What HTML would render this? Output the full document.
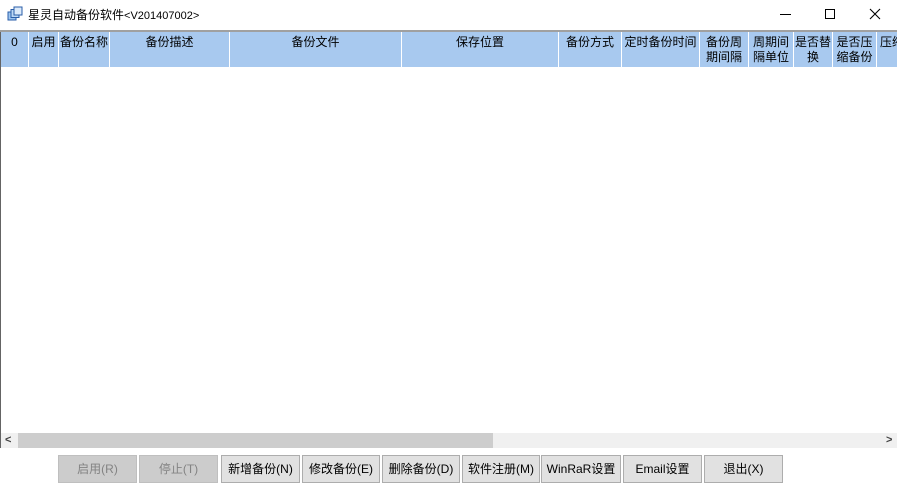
<!DOCTYPE html>
<html><head><meta charset="utf-8"><style>
*{margin:0;padding:0;box-sizing:border-box}
body{width:897px;height:488px;background:#fff;font-family:"Liberation Sans","Noto Sans CJK SC",sans-serif;font-size:12px;color:#000;position:relative;overflow:hidden}
.abs{position:absolute}
.hdr{position:absolute;top:32px;height:35px;background:#a8c9ef;left:1px;right:0}
.col{position:absolute;top:32px;height:35px;border-right:1px solid #fff;text-align:center;line-height:15px;padding-top:3px;white-space:nowrap;overflow:hidden}
.btn{position:absolute;top:455px;height:28px;border:1px solid #adadad;background:#e1e1e1;text-align:center;line-height:26px;font-size:12px}
.dis{background:#cccccc;border-color:#bfbfbf;color:#838383}
</style></head><body>
<svg class="abs" style="left:7px;top:6px" width="16" height="16" viewBox="0 0 16 16"><rect x="1" y="6" width="8" height="8" fill="#9cc4ef" stroke="#2a5ea8"/><rect x="4" y="3.5" width="8" height="8" fill="#bcd8f5" stroke="#2a5ea8"/><rect x="7" y="1" width="8" height="8" fill="#dceafa" stroke="#2a5ea8"/></svg>
<div class="abs" style="left:28px;top:7px;font-size:12px;line-height:16px">星灵自动备份软件<span style="font-size:11px">&lt;V201407002&gt;</span></div>
<div class="abs" style="left:780px;top:14px;width:11px;height:1px;background:#000"></div>
<div class="abs" style="left:825px;top:9px;width:10px;height:10px;border:1px solid #000"></div>
<svg class="abs" style="left:869px;top:8px" width="12" height="12"><path d="M1 1L11 11M11 1L1 11" stroke="#000" stroke-width="1.1"/></svg>
<div class="abs" style="left:0;top:30px;width:897px;height:2px;background:#a0a0a0"></div>
<div class="abs" style="left:0;top:32px;width:1px;height:416px;background:#646464"></div>
<div class="hdr"></div>
<div class="col" style="left:1px;width:28px">0</div>
<div class="col" style="left:29px;width:30px">启用</div>
<div class="col" style="left:59px;width:51px">备份名称</div>
<div class="col" style="left:110px;width:120px">备份描述</div>
<div class="col" style="left:230px;width:172px">备份文件</div>
<div class="col" style="left:402px;width:157px">保存位置</div>
<div class="col" style="left:559px;width:63px">备份方式</div>
<div class="col" style="left:622px;width:78px">定时备份时间</div>
<div class="col" style="left:700px;width:49px">备份周<br>期间隔</div>
<div class="col" style="left:749px;width:45px">周期间<br>隔单位</div>
<div class="col" style="left:794px;width:39px">是否替<br>换</div>
<div class="col" style="left:833px;width:44px">是否压<br>缩备份</div>
<div class="col" style="left:877px;width:30px;text-align:left;padding-left:3px;border:none">压缩</div>
<div class="abs" style="left:1px;top:433px;width:896px;height:15px;background:#f0f0f0"></div>
<div class="abs" style="left:18px;top:433px;width:475px;height:15px;background:#cdcdcd"></div>
<div class="abs" style="left:5px;top:433px;font-size:11px;line-height:15px;color:#404040;font-weight:bold">&lt;</div>
<div class="abs" style="left:886px;top:433px;font-size:11px;line-height:15px;color:#404040;font-weight:bold">&gt;</div>
<div class="btn dis" style="left:58px;width:79px">启用(R)</div>
<div class="btn dis" style="left:139px;width:79px">停止(T)</div>
<div class="btn" style="left:221px;width:79px">新增备份(N)</div>
<div class="btn" style="left:302px;width:78px">修改备份(E)</div>
<div class="btn" style="left:382px;width:78px">删除备份(D)</div>
<div class="btn" style="left:462px;width:78px">软件注册(M)</div>
<div class="btn" style="left:541px;width:80px">WinRaR设置</div>
<div class="btn" style="left:623px;width:79px">Email设置</div>
<div class="btn" style="left:704px;width:79px">退出(X)</div>
</body></html>
